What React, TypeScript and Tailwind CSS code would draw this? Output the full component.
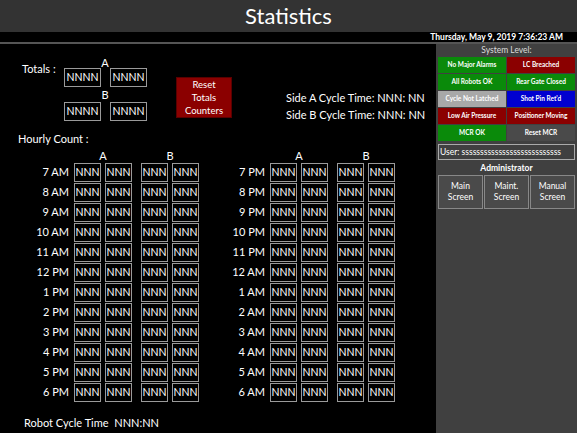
import React from "react";

const left = ["7 AM", "8 AM", "9 AM", "10 AM", "11 AM", "12 PM", "1 PM", "2 PM", "3 PM", "4 PM", "5 PM", "6 PM"];
const right = ["7 PM", "8 PM", "9 PM", "10 PM", "11 PM", "12 AM", "1 AM", "2 AM", "3 AM", "4 AM", "5 AM", "6 AM"];

const Box = ({ t, w = "w-[27px]" }: { t: string; w?: string }) => (
  <div className={`${w} h-[19px] border border-[#9a9a9a] flex items-center justify-center text-[10.5px] leading-none whitespace-nowrap overflow-hidden`}>{t}</div>
);

const Column = ({ hours, labelW }: { hours: string[]; labelW: string }) => (
  <div className="flex flex-col">
    <div className="flex h-[14px] text-[11px] leading-[14px]">
      <div className={labelW} />
      <div className="w-[58px] text-center">A</div>
      <div className="w-[9px]" />
      <div className="w-[58px] text-center">B</div>
    </div>
    <div className="flex flex-col gap-[1px]">
      {hours.map((h) => (
        <div key={h} className="flex items-center h-[19px]">
          <div className={`${labelW} text-right pr-[5px] text-[11px] whitespace-nowrap`}>{h}</div>
          <div className="flex gap-[4px]"><Box t="NNN" /><Box t="NNN" /></div>
          <div className="w-[9px]" />
          <div className="flex gap-[4px]"><Box t="NNN" /><Box t="NNN" /></div>
        </div>
      ))}
    </div>
  </div>
);

const sys: [string, string][] = [
  ["No Major Alarms", "bg-[#0a8a0a]"], ["LC Breached", "bg-[#8b0000]"],
  ["All Robots OK", "bg-[#0a8a0a]"], ["Rear Gate Closed", "bg-[#0a8a0a]"],
  ["Cycle Not Latched", "bg-[#a8a8a8]"], ["Shot Pin Ret'd", "bg-[#0000d0]"],
  ["Low Air Pressure", "bg-[#8b0000]"], ["Positioner Moving", "bg-[#8b0000]"],
  ["MCR OK", "bg-[#0a8a0a]"], ["Reset MCR", "bg-[#4a4a4a]"],
];

export default function App() {
  return (
    <div className="w-[577px] h-[433px] bg-black text-white overflow-hidden flex flex-col" style={{ fontFamily: "Lato, 'Open Sans', sans-serif" }}>
      <div className="h-[32px] bg-[#333333] flex items-center justify-center text-[22px] leading-none">Statistics</div>
      <div className="h-[10px] bg-black flex justify-end pr-[14px] text-[8.5px] font-bold leading-[10px] whitespace-nowrap">Thursday, May 9, 2019 7:36:23 AM</div>
      <div className="h-[2px] bg-[#555]" />
      <div className="flex flex-1">
        <div className="w-[436px]">
          <div className="flex pt-[14px] h-[88px]">
            <div className="pl-[22px] pt-[3px] text-[11px] w-[64px] whitespace-nowrap">Totals :</div>
            <div className="flex flex-col text-[11px]">
              <div className="text-center h-[10px] leading-[10px] w-[82px]">A</div>
              <div className="flex gap-[9px]"><Box t="NNNN" w="w-[37px]" /><Box t="NNNN" w="w-[37px]" /></div>
              <div className="text-center h-[15px] leading-[15px] w-[82px]">B</div>
              <div className="flex gap-[9px]"><Box t="NNNN" w="w-[37px]" /><Box t="NNNN" w="w-[37px]" /></div>
            </div>
            <div className="ml-[29px] mt-[19px] w-[56px] h-[41px] bg-[#8b0000] border border-[#5a0000] text-[9.5px] leading-[13px] text-center flex items-center justify-center">Reset<br />Totals<br />Counters</div>
            <div className="ml-[54px] mt-[31px] text-[11px] leading-[17px] whitespace-nowrap">
              <div>Side A Cycle Time: NNN: NN</div>
              <div>Side B Cycle Time: NNN: NN</div>
            </div>
          </div>
          <div className="pl-[18px] h-[14px] leading-[14px] text-[11px]">Hourly Count :</div>
          <div className="flex mt-[3px]">
            <Column hours={left} labelW="w-[74px]" />
            <div className="w-[11px]" />
            <Column hours={right} labelW="w-[60px]" />
          </div>
          <div className="pl-[24px] mt-[13px] text-[11px] whitespace-nowrap">Robot Cycle Time&nbsp;&nbsp;NNN:NN</div>
        </div>
        <div className="w-[141px] bg-[#404040] flex flex-col px-[2px]">
          <div className="text-center text-[8.5px] text-[#ddd] h-[13px] leading-[13px]">System Level:</div>
          <div className="grid grid-cols-2 gap-[1px]">
            {sys.map(([t, c]) => (
              <div key={t} className={`${c} h-[16px] text-[6.5px] font-bold flex items-center justify-center whitespace-nowrap`}>{t}</div>
            ))}
          </div>
          <div className="mt-[3px] h-[16px] border border-[#aaa] text-[8.5px] flex items-center pl-[1px] overflow-hidden whitespace-nowrap">User: sssssssssssssssssssssssssss</div>
          <div className="text-center text-[8.5px] font-bold h-[14px] leading-[14px] mt-[1px]">Administrator</div>
          <div className="grid grid-cols-3 gap-[1px]">
            {[["Main", "Screen"], ["Maint.", "Screen"], ["Manual", "Screen"]].map(([a, b]) => (
              <div key={a} className="h-[34px] border border-[#888] bg-[#4a4a4a] text-[8.5px] leading-[11px] text-center flex flex-col items-center justify-center"><span>{a}</span><span>{b}</span></div>
            ))}
          </div>
        </div>
      </div>
    </div>
  );
}
